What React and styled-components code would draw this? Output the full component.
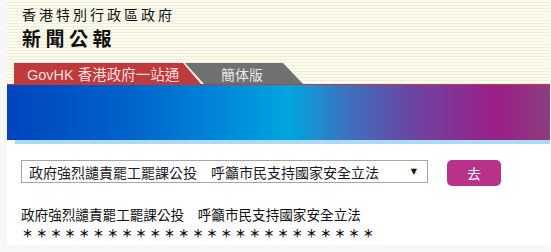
import React from 'react';
import styled, { createGlobalStyle } from 'styled-components';

const GlobalStyle = createGlobalStyle`
  html, body {
    margin: 0;
    padding: 0;
    background: #f7f7f7;
  }
  body {
    font-family: "Liberation Sans", "Noto Sans CJK TC", sans-serif;
  }
`;

const Page = styled.div`
  margin-left: 7px;
  width: 543px;
  height: 245px;
  background: #fff;
  overflow: hidden;
`;

const Masthead = styled.header`
  background: repeating-linear-gradient(
    to bottom,
    #fbfbef 0px,
    #fbfbef 2px,
    #efefd9 2px,
    #efefd9 3px
  );
  border-bottom: 1px solid #c23a3c;
`;

const TitleBlock = styled.div`
  display: flex;
  flex-direction: column;
  height: 63px;
  padding: 4px 0 0 15px;
  box-sizing: border-box;
  color: #111;
  font-family: "Noto Sans CJK TC", sans-serif;
`;

const Region = styled.div`
  font-size: 14px;
  line-height: 20px;
  letter-spacing: 3px;
`;

const Title = styled.div`
  margin-top: 1px;
  font-size: 19px;
  line-height: 26px;
  font-weight: 700;
  letter-spacing: 4.5px;
`;

const TabRow = styled.nav`
  display: flex;
  height: 21px;
  padding-left: 7px;
`;

const Tab = styled.a`
  display: flex;
  align-items: center;
  box-sizing: border-box;
  height: 21px;
  font-size: ${(p) => p.$size}px;
  text-decoration: none;
  white-space: nowrap;
`;

const HomeTab = styled(Tab)`
  width: 187px;
  padding-left: 13px;
  background: #bf3a3c;
  color: #f6dede;
  clip-path: polygon(0 0, 169px 0, 100% 100%, 0 100%);
  font-family: "Liberation Sans", "Noto Sans CJK TC", sans-serif;
`;

const LangTab = styled(Tab)`
  width: 118px;
  margin-left: -16px;
  padding-left: 36px;
  background: #707070;
  color: #e8e8e8;
  clip-path: polygon(0 0, 98px 0, 100% 100%, 19px 100%);
  font-family: "Noto Sans CJK TC", sans-serif;
`;

const Banner = styled.div`
  height: 55px;
  background: linear-gradient(
    to right,
    #0044be 0%,
    #0062ca 22%,
    #0088d8 40%,
    #00a6de 52%,
    #3a74c0 62%,
    #6a46a4 74%,
    #9a1f86 90%,
    #8a3e80 100%
  );
`;

const Strip = styled.div`
  height: 4px;
  margin-left: 8px;
  background: #a9dbf5;
`;

const Content = styled.main`
  padding: 16px 0 0 14px;
  font-family: "Noto Sans CJK TC", sans-serif;
  color: #111;
`;

const PickerRow = styled.div`
  display: flex;
  align-items: flex-start;
  gap: 19px;
`;

const Picker = styled.div`
  display: flex;
  align-items: center;
  justify-content: space-between;
  box-sizing: border-box;
  width: 407px;
  height: 23px;
  padding: 0 10px 0 7px;
  border: 1px solid #a6a6a6;
  font-size: 14px;
  color: #1a1a2a;
  white-space: nowrap;
`;

const Arrow = styled.span`
  font-family: "DejaVu Sans", sans-serif;
  font-size: 8px;
  color: #111;
`;

const GoButton = styled.button`
  width: 54px;
  height: 26px;
  border: none;
  border-radius: 5px;
  background: #b8318b;
  color: #fff;
  font-family: "Noto Sans CJK TC", sans-serif;
  font-size: 14px;
  padding: 0;
`;

const Headline = styled.p`
  margin: 18px 0 0;
  font-size: 13.6px;
  line-height: 20px;
  white-space: nowrap;
`;

const Stars = styled.p`
  margin: 0;
  padding-left: 1px;
  font-size: 11px;
  line-height: 18px;
  font-weight: 700;
  letter-spacing: 3.2px;
  white-space: nowrap;
`;

const HEADLINE = '政府強烈譴責罷工罷課公投　呼籲市民支持國家安全立法';

const App = () => {
  return (
    <>
      <GlobalStyle />
      <Page>
        <Masthead>
          <TitleBlock>
            <Region>香港特別行政區政府</Region>
            <Title>新聞公報</Title>
          </TitleBlock>
          <TabRow>
            <HomeTab href="#" $size={14.5}>GovHK 香港政府一站通</HomeTab>
            <LangTab href="#" $size={14}>簡体版</LangTab>
          </TabRow>
        </Masthead>
        <Banner />
        <Strip />
        <Content>
          <PickerRow>
            <Picker>
              <span>{HEADLINE}</span>
              <Arrow>▼</Arrow>
            </Picker>
            <GoButton>去</GoButton>
          </PickerRow>
          <Headline>{HEADLINE}</Headline>
          <Stars>{'＊'.repeat(25)}</Stars>
        </Content>
      </Page>
    </>
  );
};

export default App;
